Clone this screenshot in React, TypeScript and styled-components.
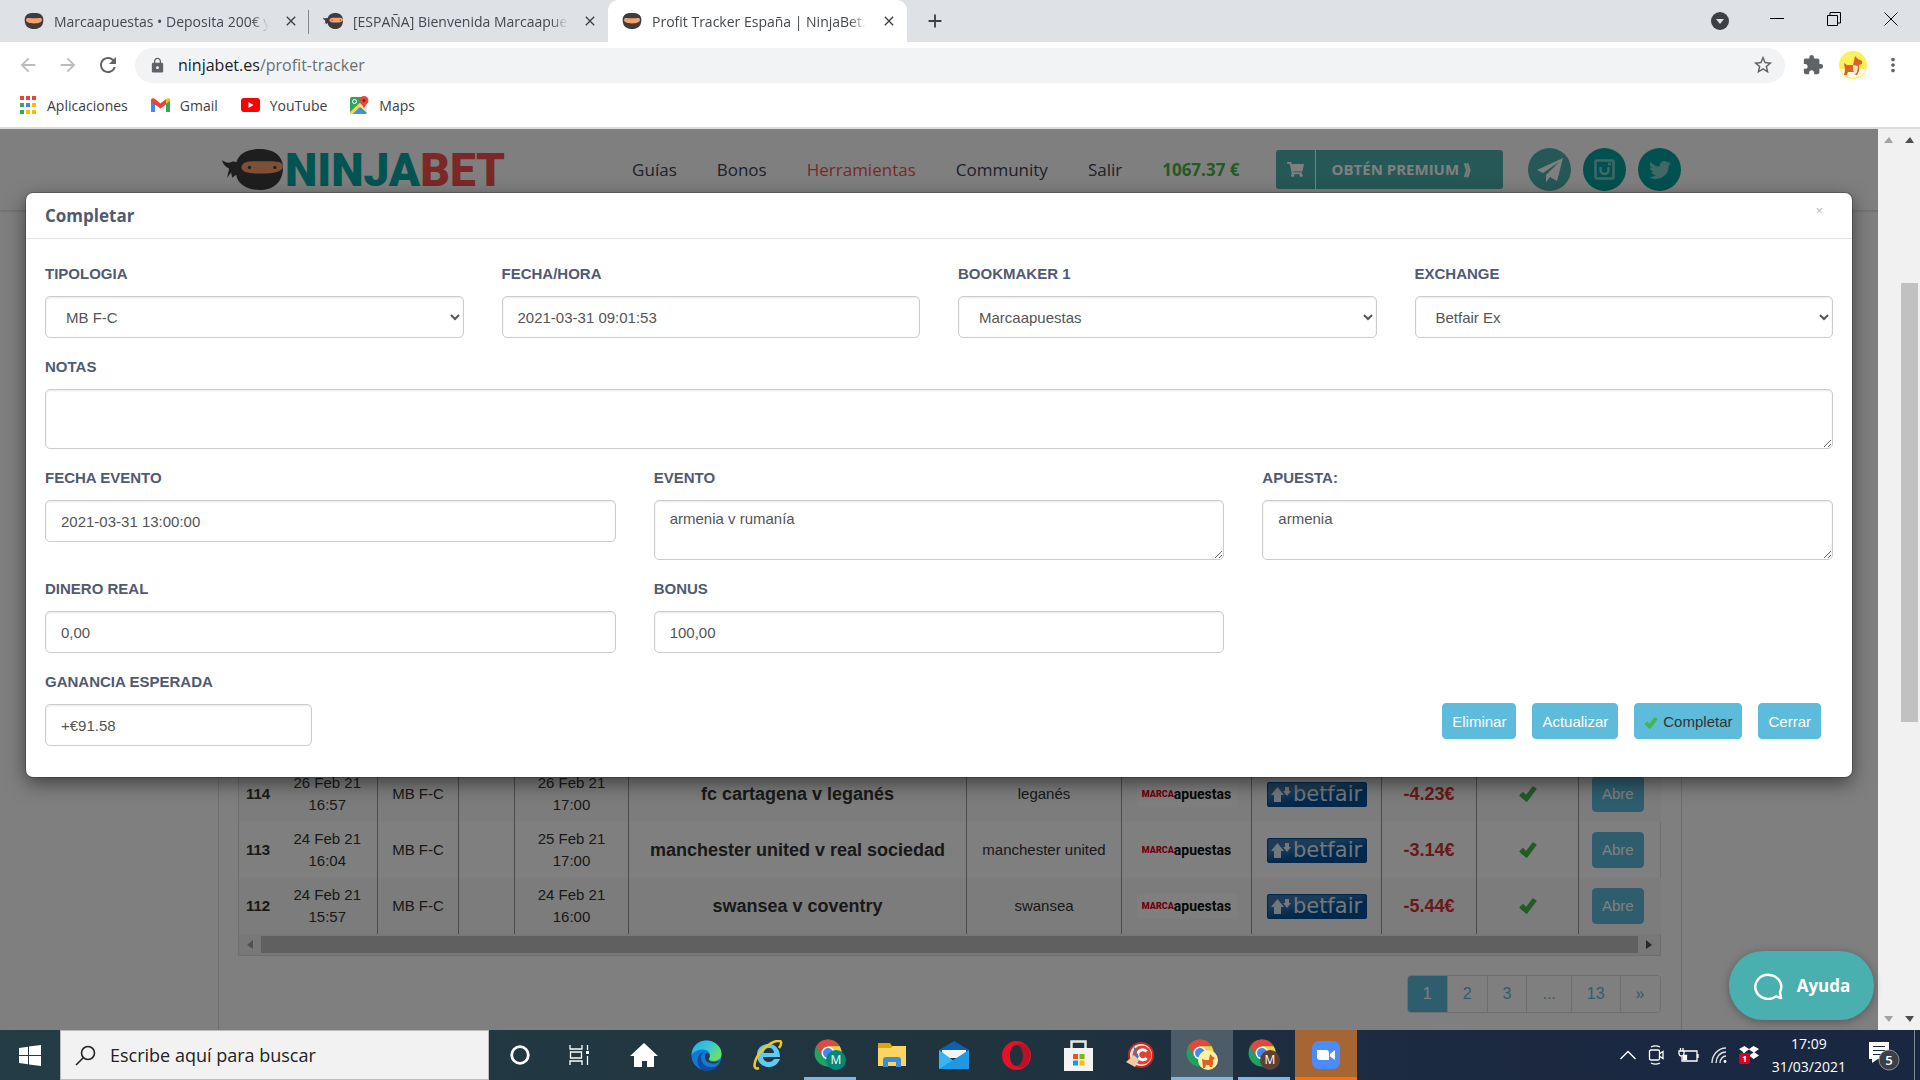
import React from "react";
import styled, { createGlobalStyle } from "styled-components";
import { FaShoppingCart, FaTwitter } from "react-icons/fa";
import {
  MdArrowBack,
  MdArrowForward,
  MdRefresh,
  MdLock,
  MdStarBorder,
  MdExtension,
  MdMoreVert,
  MdClose,
  MdAdd,
} from "react-icons/md";

const uiFont = `"Open Sans", "Noto Sans", sans-serif`;
const bodyFont = `"Liberation Sans", Arial, sans-serif`;

const GlobalStyle = createGlobalStyle`
  * { box-sizing: border-box; }
  body { margin: 0; background: #fff; font-family: ${bodyFont}; overflow: hidden; }
  button, input, select, textarea { font: inherit; margin: 0; }
  button { cursor: pointer; }
`;

const Screen = styled.div`
  display: flex;
  flex-direction: column;
  height: 100vh;
`;

/* ---------- browser chrome ---------- */

const IconButton = styled.button<{ $w?: number; $h?: number; $color?: string; $size?: number }>`
  display: flex;
  align-items: center;
  justify-content: center;
  flex: none;
  width: ${(p) => p.$w ?? 28}px;
  height: ${(p) => p.$h ?? 28}px;
  padding: 0;
  border: 0;
  background: none;
  color: ${(p) => p.$color ?? "#5f6368"};
  font-size: ${(p) => p.$size ?? 22}px;
`;

const TabStrip = styled.div`
  display: flex;
  height: 42px;
  padding-left: 10px;
  background: #dee1e6;
  font-family: ${uiFont};
`;

const Tab = styled.div<{ $active?: boolean; $divider?: boolean }>`
  display: flex;
  align-items: center;
  gap: 10px;
  width: 299px;
  padding: 0 6px 0 14px;
  border-radius: 10px 10px 0 0;
  background: ${(p) => (p.$active ? "#fff" : "transparent")};
  position: relative;
  &::after {
    content: "";
    display: ${(p) => (p.$divider ? "block" : "none")};
    position: absolute;
    right: 0;
    top: 10px;
    width: 1px;
    height: 24px;
    background: #85888c;
  }
`;

const TabTitle = styled.span`
  flex: 1;
  overflow: hidden;
  white-space: nowrap;
  font-size: 14px;
  color: #45494d;
  mask-image: linear-gradient(to right, #000 92%, transparent);
`;

const WindowControls = styled.div`
  display: flex;
  align-items: center;
  gap: 29px;
  margin-left: auto;
  padding-right: 15px;
`;

const Toolbar = styled.div`
  display: flex;
  align-items: center;
  height: 46px;
  padding: 0 13px 0 14px;
  font-family: ${uiFont};
`;

const NavButtons = styled.div`
  display: flex;
  gap: 12px;
  margin-right: 13px;
`;

const AddressBar = styled.div`
  display: flex;
  align-items: center;
  flex: 1;
  gap: 8px;
  height: 35px;
  padding: 0 8px 0 14px;
  border-radius: 18px;
  background: #f1f3f4;
  color: #5f6368;
  font-size: 17px;
`;

const Url = styled.span`
  flex: 1;
  padding-left: 4px;
  font-size: 16px;
  color: #6a6e72;
  b { font-weight: 400; color: #202124; }
`;

const ToolbarActions = styled.div`
  display: flex;
  align-items: center;
  gap: 12px;
  margin-left: 14px;
`;

const Bookmarks = styled.nav`
  display: flex;
  gap: 23px;
  height: 41px;
  padding: 0 18px 5px;
  border-bottom: 2px solid #dadce0;
  font-family: ${uiFont};
`;

const Bookmark = styled.a`
  display: flex;
  align-items: center;
  gap: 10px;
  font-size: 14px;
  color: #3c4043;
  text-decoration: none;
`;

/* ---------- page ---------- */

const Viewport = styled.main`
  display: flex;
  flex: 1;
  min-height: 0;
  position: relative;
`;

const Page = styled.div`
  display: flex;
  flex-direction: column;
  flex: 1;
  min-width: 0;
  overflow: hidden;
`;

const SiteHeader = styled.header`
  flex: none;
  height: 81px;
  box-shadow: 0 1px 3px rgba(0, 0, 0, 0.2);
  font-family: "Open Sans", sans-serif;
`;

const HeaderInner = styled.div`
  display: flex;
  align-items: center;
  max-width: 1463px;
  height: 81px;
  margin: 0 auto;
  padding-left: 4px;
`;

const Logo = styled.a`
  display: flex;
  align-items: center;
  gap: 2px;
  text-decoration: none;
  font: 900 46px/48px Roboto, sans-serif;
  color: #00aaa6;
  b { font-weight: 900; color: #f5524d; }
  span { display: block; }
`;

const SiteNav = styled.nav`
  display: flex;
  align-items: center;
  gap: 40px;
  margin-left: 127px;
`;

const SiteLink = styled.a<{ $tone?: "active" | "balance" }>`
  font-size: 17px;
  text-decoration: none;
  color: ${(p) => (p.$tone === "active" ? "#f5524d" : p.$tone === "balance" ? "#45b649" : "#3d4155")};
  font-weight: ${(p) => (p.$tone === "balance" ? 700 : 400)};
`;

const Premium = styled.button`
  display: flex;
  align-items: center;
  height: 39px;
  margin-left: auto;
  padding: 0;
  border: 0;
  border-radius: 3px;
  background: #4ab0af;
  color: #fff;
  font-size: 15px;
  font-weight: 700;
  svg { width: 39px; }
  span { padding: 0 32px 0 16px; border-left: 1px solid #fff; line-height: 39px; }
`;

const Socials = styled.div`
  display: flex;
  gap: 12px;
  margin-left: 25px;
`;

const Social = styled.a<{ $light?: boolean }>`
  display: flex;
  align-items: center;
  justify-content: center;
  width: 43px;
  height: 43px;
  border-radius: 50%;
  background: ${(p) => (p.$light ? "#4ab0af" : "#00a3a0")};
  color: ${(p) => (p.$light ? "#fff" : "#7fd0ce")};
  font-size: 22px;
`;

const Panel = styled.section`
  display: flex;
  flex: 1;
  flex-direction: column;
  justify-content: flex-end;
  width: 100%;
  max-width: 1464px;
  margin: 0 auto;
  padding: 0 20px 17px 19px;
  border: 1px solid #ddd;
  border-width: 0 1px;
`;

const TableFrame = styled.div`
  border: 1px solid #ddd;
`;

const Table = styled.table`
  width: 100%;
  table-layout: fixed;
  border-collapse: collapse;
  color: #333;
  font-size: 15px;
  line-height: 22px;
  text-align: center;
  tr { height: 56px; }
  tr:nth-child(odd) { background: #f9f9f9; }
  td:last-child { padding-right: 4px; }
`;

const Cell = styled.td<{ $line?: boolean; $kind?: "event" | "profit" | "id" }>`
  padding: 0;
  border-right: ${(p) => (p.$line ? "1px solid #999" : "0")};
  font-weight: ${(p) => (p.$kind ? 700 : 400)};
  font-size: ${(p) => (p.$kind === "event" || p.$kind === "profit" ? 18 : 15)}px;
  color: ${(p) => (p.$kind === "profit" ? "#d03232" : "#333")};
  svg { display: block; margin: 0 auto; }
`;

const Marca = styled.div`
  display: flex;
  align-items: center;
  justify-content: center;
  width: 100px;
  height: 25px;
  margin: 0 auto;
  border-radius: 3px;
  background: #fff;
  color: #111;
  font: 700 14px/25px Roboto, sans-serif;
  b { color: #e2001a; font-size: 9px; font-weight: 900; }
`;

const Betfair = styled.div`
  display: flex;
  align-items: center;
  justify-content: center;
  gap: 2px;
  width: 100px;
  height: 25px;
  margin: 0 auto;
  border: 1px solid #004f93;
  border-radius: 2px;
  background: linear-gradient(170deg, #3c78ae 30%, #00529c 60%);
  color: #e4eef8;
  font: 500 21px/22px "DejaVu Sans", sans-serif;
  svg { margin: 0; }
`;

const SmallButton = styled.button<{ $dark?: boolean }>`
  display: inline-flex;
  align-items: center;
  gap: 5px;
  height: 36px;
  padding: 0 9px;
  border: 1px solid #5dbbdc;
  border-radius: 4px;
  background: #5dbbdc;
  color: ${(p) => (p.$dark ? "#333" : "#fff")};
  font-size: 15px;
  svg { margin-top: 4px; }
`;

const HScroll = styled.div`
  display: flex;
  align-items: center;
  justify-content: space-between;
  gap: 8px;
  height: 21px;
  padding: 0 8px;
  background: #f1f1f1;
`;

const HThumb = styled.div`
  flex: 1;
  height: 17px;
  background: #c1c1c1;
`;

const Pagination = styled.nav`
  display: flex;
  align-self: flex-end;
  margin-top: 19px;
  border: 1px solid #ddd;
  border-radius: 4px;
  overflow: hidden;
`;

const PageLink = styled.a<{ $active?: boolean }>`
  padding: 0 15px;
  border-right: 1px solid #ddd;
  background: ${(p) => (p.$active ? "#5dbbdc" : "#fff")};
  color: ${(p) => (p.$active ? "#fff" : "#5dbbdc")};
  font-size: 16px;
  line-height: 36px;
  text-decoration: none;
  &:last-child { border-right: 0; }
`;

const VScroll = styled.div`
  display: flex;
  flex: none;
  flex-direction: column;
  align-items: center;
  justify-content: space-between;
  width: 21px;
  padding: 8px 0;
  background: #f1f1f1;
`;

const VTrack = styled.div`
  flex: 1;
  width: 17px;
  padding-top: 140px;
`;

const VThumb = styled.div`
  width: 17px;
  height: 439px;
  background: #c1c1c1;
`;

/* ---------- modal ---------- */

const ModalLayer = styled.div`
  position: absolute;
  inset: 0 21px 0 0;
  display: flex;
`;

const Backdrop = styled.div`
  flex: 1;
  padding: 64px 26px 0;
  background: rgba(0, 0, 0, 0.5);
`;

const Dialog = styled.div`
  border-radius: 7px;
  background: #fff;
  box-shadow: 0 0 0 1px rgba(0, 0, 0, 0.2), 0 6px 19px rgba(0, 0, 0, 0.5);
`;

const DialogHeader = styled.div`
  display: flex;
  align-items: center;
  justify-content: space-between;
  height: 46px;
  padding: 0 29px 0 19px;
  border-bottom: 1px solid #e5e5e5;
`;

const DialogTitle = styled.h2`
  margin: 0;
  font: 700 17px/24px "Open Sans", sans-serif;
  color: #515a73;
`;

const CloseX = styled.button`
  height: 28px;
  padding: 0;
  margin-bottom: 10px;
  border: 0;
  background: none;
  color: #bbb;
  font: 400 13px/28px ${bodyFont};
`;

const Form = styled.form`
  display: flex;
  flex-direction: column;
  gap: 18px;
  padding: 24px 19px 31px;
`;

const FormRow = styled.div<{ $cols: number }>`
  display: grid;
  grid-template-columns: repeat(${(p) => p.$cols}, 1fr);
  gap: 38px;
  align-items: start;
`;

const Field = styled.div<{ $narrow?: boolean }>`
  display: flex;
  flex-direction: column;
  gap: 11px;
  width: ${(p) => (p.$narrow ? "267px" : "auto")};
  label {
    color: #515a73;
    font-size: 15px;
    font-weight: 700;
    line-height: 22px;
    text-transform: uppercase;
  }
  input, select, textarea {
    width: 100%;
    height: 42px;
    padding: 0 15px;
    border: 1px solid #ccc;
    border-radius: 5px;
    background: #fff;
    box-shadow: inset 0 1px 2px rgba(0, 0, 0, 0.09);
    color: #555;
    font-size: 15px;
  }
  select { padding: 0 2px 0 16px; }
  textarea { display: block; height: 60px; padding: 7px 15px; line-height: 21px; }
`;

const FooterRow = styled.div`
  display: flex;
  align-items: flex-end;
  justify-content: space-between;
`;

const Actions = styled.div`
  display: flex;
  gap: 16px;
  padding: 0 12px 7px;
`;

const HelpButton = styled.button`
  position: absolute;
  right: 46px;
  bottom: 10px;
  display: flex;
  align-items: center;
  justify-content: center;
  gap: 13px;
  width: 145px;
  height: 69px;
  border: 0;
  border-radius: 34px;
  background: #4aafaf;
  box-shadow: 0 2px 10px rgba(0, 0, 0, 0.3);
  color: #fff;
  font: 700 17px/24px "Open Sans", sans-serif;
`;

/* ---------- taskbar ---------- */

const Taskbar = styled.footer`
  display: flex;
  flex: none;
  height: 50px;
  background: linear-gradient(to right, #233c45, #20343f 50%, #1b2840 80%, #1a2740);
  color: #fff;
  font-family: ${uiFont};
`;

const TaskButton = styled.button<{ $line?: string; $bg?: string; $inset?: number; $w?: number }>`
  display: flex;
  align-items: center;
  justify-content: center;
  flex: none;
  width: ${(p) => p.$w ?? 62}px;
  height: 50px;
  padding: 0;
  border: 0;
  background: ${(p) => p.$bg ?? "none"};
  position: relative;
  &::after {
    content: "";
    position: absolute;
    bottom: 0;
    left: ${(p) => p.$inset ?? 0}px;
    right: ${(p) => p.$inset ?? 0}px;
    height: 3px;
    background: ${(p) => p.$line ?? "transparent"};
  }
`;

const SearchBox = styled.label`
  display: flex;
  align-items: center;
  gap: 14px;
  width: 429px;
  padding: 0 14px;
  border: 1px solid #bbb;
  background: #f2f2f2;
  input {
    flex: 1;
    min-width: 0;
    padding: 0;
    border: 0;
    outline: 0;
    background: none;
    font-size: 18px;
    color: #222;
  }
  input::placeholder { color: #222; opacity: 1; }
`;

const Tray = styled.div`
  display: flex;
  align-items: center;
  gap: 12px;
  margin-left: auto;
  padding-right: 5px;
`;

const Clock = styled.div`
  padding: 0 10px 0 1px;
  font-size: 14px;
  line-height: 23px;
  text-align: center;
`;

const Notices = styled.div`
  display: flex;
  align-items: center;
  height: 50px;
  border-right: 1px solid #7d8794;
  padding-right: 14px;
`;

/* ---------- drawings ---------- */

const NinjaFace = ({ w = 20, h = 16, tail = false }: { w?: number; h?: number; tail?: boolean }) => (
  <svg width={w} height={h} viewBox="0 0 60 40" preserveAspectRatio="none" aria-hidden="true">
    <path
      d={
        tail
          ? "M37 0C50 0 60 6 60 18C60 33 50 40 37 40C25 40 15 34 14 25L10 28L9 23L5 28L7 19C3 17 1 15 0 11C4 14 8 14 11 12L14 13C17 4 25 0 37 0Z"
          : "M30 0C48 0 58 4 58 18C58 33 46 40 30 40C14 40 2 33 2 18C2 4 12 0 30 0Z"
      }
      fill="#3d3d3f"
    />
    {tail ? (
      <>
        <path d="M19 18C20 11 29 12 39 12C50 12 60 11 60 17C60 22 51 24 39 24C27 24 20 23 19 18Z" fill="#f4a16e" />
        <circle cx="27" cy="18" r="1.6" fill="#5b382a" />
        <circle cx="52" cy="18" r="1.6" fill="#5b382a" />
      </>
    ) : (
      <path d="M6 17C6 10 20 13 30 13C42 13 54 10 54 17C54 24 43 26 30 26C17 26 6 24 6 17Z" fill="#f4a16e" />
    )}
  </svg>
);

const Tick = ({ w = 18, h = 16 }: { w?: number; h?: number }) => (
  <svg width={w} height={h} viewBox="0 0 18 16" aria-hidden="true">
    <path d="M.5 9L3.500 6.200Q4 5.800 4.500 6.300L7 9 13.500.6Q14 0 14.600.4L17.400 2.300Q17.900 2.700 17.500 3.300L8.500 15.200Q7.500 16.300 6.500 15.200L.5 10Q0 9.500.5 9Z" fill="#45b649" />
  </svg>
);

const Triangle = ({ dir, color }: { dir: "up" | "down" | "left" | "right"; color: string }) => {
  const pts = { up: "0,6 9,6 5,0", down: "0,0 9,0 5,6", left: "6,0 6,9 0,5", right: "0,0 0,9 6,5" }[dir];
  const wide = dir === "up" || dir === "down";
  return (
    <svg width={wide ? 9 : 6} height={wide ? 6 : 9} aria-hidden="true">
      <polygon points={pts} fill={color} />
    </svg>
  );
};

const Dog = ({ size = 28 }: { size?: number }) => (
  <svg width={size} height={size} viewBox="0 0 28 28" aria-hidden="true">
    <circle cx="14" cy="14" r="14" fill="#fdf05d" />
    <path d="M1 18a14 14 0 0 0 26 0z" fill="#fffde8" />
    <path d="M5 12l3 2h6l1-4 1-5 3 3 4 2v3l-3 1v6l-2 4h-2l-1-3H9l-1 3H5l1-5z" fill="#e0601f" />
    <path d="M14 14l5 1-1 6-2 3-2-5z" fill="#fbe3cb" />
  </svg>
);

const Chrome = ({ letter, color, dog }: { letter?: string; color?: string; dog?: boolean }) => (
  <svg width="32" height="32" viewBox="0 0 32 32" aria-hidden="true">
    <circle cx="14" cy="14" r="13.500" fill="#1fa363" />
    <path d="M2.300 7.200A13.500 13.500 0 0 1 25.700 7.200H14L8 17.500Z" fill="#e0493e" />
    <path d="M25.700 7.200A13.500 13.500 0 0 1 14 27.500L20 17.500 14 7.200Z" fill="#fccd40" />
    <circle cx="14" cy="14" r="6.500" fill="#fff" />
    <circle cx="14" cy="14" r="5" fill="#4487f3" />
    {dog ? (
      <g transform="translate(12 11)">
        <circle cx="10" cy="10" r="10" fill="#fdf3a0" />
        <path d="M4 9l3 1h4l1-6 3 3 2 1-2 2v4l-1 3h-2l-1-2H8l-1 3H5z" fill="#e0601f" />
      </g>
    ) : (
      <>
        <circle cx="22" cy="21" r="10" fill={color} />
        <text x="22" y="25" textAnchor="middle" fontFamily="Open Sans" fontSize="12" fill="#fff">
          {letter}
        </text>
      </>
    )}
  </svg>
);

const WindowsIcon = () => (
  <svg width="22" height="21" viewBox="0 0 22 21" aria-hidden="true">
    <path d="M0 3l9-1.300V10H0zM10 1.500L22 0v10H10zM0 11h9v8.300L0 18zM10 11h12v10l-12-1.500z" fill="#fff" />
  </svg>
);

const Cortana = () => (
  <svg width="20" height="20" aria-hidden="true">
    <circle cx="10" cy="10" r="8.300" fill="none" stroke="#fff" strokeWidth="2.800" />
  </svg>
);

const TaskView = () => (
  <svg width="26" height="20" viewBox="0 0 26 20" fill="none" stroke="#fff" strokeWidth="1.300" aria-hidden="true">
    <path d="M1 0v4h12V0M1 20v-4h12v4M1.500 7h11v6h-11zM18.500 0v5M18.500 11v9" />
    <path d="M17 6h3v3h-3z" fill="#fff" stroke="none" />
  </svg>
);

const HomeIcon = () => (
  <svg width="28" height="24" viewBox="0 0 28 24" aria-hidden="true">
    <path d="M14 0l14 13h-4v11h-7v-6h-5v6H4V13H0z" fill="#fff" />
  </svg>
);

const EdgeIcon = () => (
  <svg width="31" height="31" viewBox="0 0 31 31" aria-hidden="true">
    <defs>
      <linearGradient id="edgeTop" x1="0" x2="1" y1="0" y2="0.600">
        <stop offset="0" stopColor="#2aa9e8" />
        <stop offset="0.500" stopColor="#35c5dd" />
        <stop offset="1" stopColor="#6be263" />
      </linearGradient>
    </defs>
    <circle cx="15.500" cy="15.500" r="15" fill="#1478d4" />
    <path d="M.5 15C1 6 7 .5 15.500.5 24 .5 31 7 30.500 14c0 5-4 7-8 7-3 0-5-1-4.500-2.500 3-4-.5-9-6-9C6 9.500 2 12 .5 15Z" fill="url(#edgeTop)" />
    <path d="M10 17c0 7 6 11 12 10 3 0 5-2 6-3-3 5-8 7-13 7C9 30 5 24 7 18c1-4 4-6 6-6-2 1-3 3-3 5Z" fill="#0d4f9e" />
    <path d="M15.500 13c3 0 4 3 2.500 5.500-1 2 2 4 6 3.500 2 0 4-1 5-2-1 2-3 3.500-6 3.500-5 0-9-2-9-6.500 0-2 .5-3.500 1.500-4Z" fill="#233c45" />
  </svg>
);

const ExplorerIcon = () => (
  <svg width="30" height="30" viewBox="0 0 30 30" aria-hidden="true">
    <path d="M27 17H10c0 3 3 5 6 5 2 0 4-1 5-3h6c-2 5-6 8-11 8C9 27 4 22 4 15S9 4 16 4c7 0 11 6 11 13zM10.500 13H21c0-3-2-5-5-5s-5 2-5.500 5z" fill="#5fcbf5" />
    <path d="M26 8c3-4 3-8-1-7C19 1 8 9 4 17c-4 8-3 13 2 11" fill="none" stroke="#f7c51e" strokeWidth="2.600" />
  </svg>
);

const FolderIcon = () => (
  <svg width="28" height="24" viewBox="0 0 28 24" aria-hidden="true">
    <path d="M0 0h12l2 3h14v8H0z" fill="#e0a30a" />
    <path d="M0 5h13l2-2h13v20H0z" fill="#fcd462" />
    <path d="M5 24v-7c0-2 1-3 3-3h12c2 0 3 1 3 3v7h-5v-5h-8v5z" fill="#3b8ed4" />
  </svg>
);

const MailIcon = () => (
  <svg width="30" height="28" viewBox="0 0 30 28" aria-hidden="true">
    <path d="M0 9l15-9 15 9v5H0z" fill="#0e62ad" />
    <path d="M3 9h24v8H3z" fill="#f4f4f4" />
    <path d="M0 9l15 11L30 9v19H0z" fill="#35b5f1" />
    <path d="M0 28L30 9v19z" fill="#2196e3" />
  </svg>
);

const OperaIcon = () => (
  <svg width="29" height="29" viewBox="0 0 29 29" aria-hidden="true">
    <path fillRule="evenodd" d="M14.500 0a14.500 14.500 0 1 0 0 29 14.500 14.500 0 0 0 0-29zm0 4c4 0 6.500 4.500 6.500 10.500S18.500 25 14.500 25 8 20.500 8 14.500 10.500 4 14.500 4z" fill="#e3122a" />
    <path d="M14.500 4c4 0 6.500 4.500 6.500 10.500S18.500 25 14.500 25c3 2 6 2 9 0a14.500 14.500 0 0 0 0-21c-3-2-6-2-9 0z" fill="#b81226" />
  </svg>
);

const StoreIcon = () => (
  <svg width="29" height="31" viewBox="0 0 29 31" aria-hidden="true">
    <path d="M7.500 9V1.500h14V9" fill="none" stroke="#e8e8e8" strokeWidth="2.500" />
    <path d="M0 8h29v23H0z" fill="#f3f3f3" />
    <path d="M9 14h5v5H9z" fill="#f25022" />
    <path d="M15.500 14h5v5h-5z" fill="#7fba00" />
    <path d="M9 20.500h5v5H9z" fill="#00a4ef" />
    <path d="M15.500 20.500h5v5h-5z" fill="#ffb900" />
  </svg>
);

const CleanerIcon = () => (
  <svg width="28" height="27" viewBox="0 0 28 27" aria-hidden="true">
    <circle cx="15" cy="13" r="13" fill="#c9251c" />
    <circle cx="15" cy="13" r="11" fill="#f0e4e0" />
    <circle cx="16" cy="13" r="9.500" fill="#e2432f" />
    <path d="M20.500 9.500A5 5 0 1 0 20.500 16" fill="none" stroke="#fff" strokeWidth="3" />
    <path d="M7 2l6 13-3 2z" fill="#2d7fc4" />
    <path d="M0 20l8-7 5 5-4 7z" fill="#f0c9a0" />
  </svg>
);

const ZoomIcon = () => (
  <svg width="28" height="28" viewBox="0 0 28 28" aria-hidden="true">
    <rect width="28" height="28" rx="7" fill="#4a8cff" />
    <path d="M5 9h9c2 0 3 1 3 3v7H8c-2 0-3-1-3-3zM18 13l5-4v10l-5-3.500z" fill="#fff" />
  </svg>
);

const MarcaLogo = () => (
  <Marca>
    <b>MARCA</b>apuestas
  </Marca>
);

const BetfairLogo = () => (
  <Betfair>
    <svg width="20" height="17" viewBox="0 0 20 17" aria-hidden="true">
      <path d="M6.500 1l6.500 8H10v7H3V9H0zM16 10l-4-5h2V1h4v4h2z" fill="#e4eef8" />
    </svg>
    betfair
  </Betfair>
);

/* ---------- data ---------- */

const tabs = [
  { title: "Marcaapuestas • Deposita 200€ y", divider: true },
  { title: "[ESPAÑA] Bienvenida Marcaapuestas", tail: true },
  { title: "Profit Tracker España | NinjaBet.es", active: true },
];

const bets = [
  { id: 114, made: ["26 Feb 21", "16:57"], event: ["26 Feb 21", "17:00"], name: "fc cartagena v leganés", pick: "leganés", profit: "-4.23€" },
  { id: 113, made: ["24 Feb 21", "16:04"], event: ["25 Feb 21", "17:00"], name: "manchester united v real sociedad", pick: "manchester united", profit: "-3.14€" },
  { id: 112, made: ["24 Feb 21", "15:57"], event: ["24 Feb 21", "16:00"], name: "swansea v coventry", pick: "swansea", profit: "-5.44€" },
];

const columnWidths = [39, 100, 81, 56, 114, 338, 155, 130, 130, 95, 102, 82];

const BrowserTop = () => (
  <>
    <TabStrip>
      {tabs.map((t) => (
        <Tab key={t.title} $active={t.active} $divider={t.divider}>
          <NinjaFace tail={t.tail} />
          <TabTitle>{t.title}</TabTitle>
          <IconButton $w={24} $size={16} $color="#3c4043" aria-label="Cerrar pestaña">
            <MdClose />
          </IconButton>
        </Tab>
      ))}
      <IconButton $w={56} $h={42} $size={22} $color="#3c4043" aria-label="Nueva pestaña">
        <MdAdd />
      </IconButton>
      <WindowControls>
        <IconButton aria-label="Buscar pestañas">
          <svg width="18" height="18">
            <circle cx="9" cy="9" r="9" fill="#3c4043" />
            <path d="M5 7h8l-4 5z" fill="#dee1e6" />
          </svg>
        </IconButton>
        <IconButton aria-label="Minimizar">
          <svg width="14" height="14">
            <path d="M0 4.500h14" stroke="#000" />
          </svg>
        </IconButton>
        <IconButton aria-label="Restaurar">
          <svg width="14" height="18" fill="none" stroke="#000">
            <path d="M.5 3.500h10v10H.5zM3 3V.5h10.500V11H11" />
          </svg>
        </IconButton>
        <IconButton aria-label="Cerrar">
          <svg width="14" height="18" stroke="#000">
            <path d="M.5.5l13 13M13.500.5l-13 13" />
          </svg>
        </IconButton>
      </WindowControls>
    </TabStrip>
    <Toolbar>
      <NavButtons>
        <IconButton $color="#babcbe" aria-label="Atrás"><MdArrowBack /></IconButton>
        <IconButton $color="#babcbe" aria-label="Adelante"><MdArrowForward /></IconButton>
        <IconButton $size={24} aria-label="Recargar"><MdRefresh /></IconButton>
      </NavButtons>
      <AddressBar>
        <MdLock />
        <Url><b>ninjabet.es</b>/profit-tracker</Url>
        <IconButton aria-label="Favorito"><MdStarBorder /></IconButton>
      </AddressBar>
      <ToolbarActions>
        <IconButton aria-label="Extensiones"><MdExtension /></IconButton>
        <IconButton aria-label="Perfil"><Dog /></IconButton>
        <IconButton aria-label="Menú"><MdMoreVert /></IconButton>
      </ToolbarActions>
    </Toolbar>
    <Bookmarks>
      <Bookmark href="#apps">
        <svg width="19" height="18" aria-hidden="true">
          {["#ea4335", "#ea4335", "#ea4335", "#34a853", "#4285f4", "#fbbc04", "#34a853", "#fbbc04", "#fbbc04"].map((c, i) => (
            <rect key={i} x={2 + (i % 3) * 6} y={Math.floor(i / 3) * 7} width="4" height="4" fill={c} />
          ))}
        </svg>
        Aplicaciones
      </Bookmark>
      <Bookmark href="#gmail">
        <svg width="19" height="14" viewBox="0 0 19 14" aria-hidden="true">
          <path d="M0 2v12h4V5z" fill="#4285f4" />
          <path d="M19 2v12h-4V5z" fill="#34a853" />
          <path d="M15 1.500L17 0c1 0 2 .5 2 2.500L15 6z" fill="#fbbc04" />
          <path d="M0 2.500C0 .5 2-.5 4 1l5.500 4.500L15 1v5.500l-5.500 4L0 4z" fill="#ea4335" />
        </svg>
        Gmail
      </Bookmark>
      <Bookmark href="#youtube">
        <svg width="19" height="14" aria-hidden="true">
          <rect width="19" height="14" rx="3" fill="#f00" />
          <path d="M7.500 4v6l5-3z" fill="#fff" />
        </svg>
        YouTube
      </Bookmark>
      <Bookmark href="#maps">
        <svg width="19" height="19" viewBox="0 0 19 19" aria-hidden="true">
          <rect y="1" width="17" height="17" rx="2" fill="#34a261" />
          <path d="M0 16L15 2l2 2v12L11 10 3 18H1z" fill="#fbd34a" />
          <path d="M3 18l6-6 7 6z" fill="#4c8bf5" />
          <path d="M9 10l8 7V6z" fill="#dfe3e6" />
          <circle cx="4.500" cy="5.500" r="2" fill="none" stroke="#fff" />
          <path d="M14 0a4.500 4.500 0 0 1 4.500 4.500C18.500 8 14.500 9 14 13 13.500 9 9.500 8 9.500 4.500A4.500 4.500 0 0 1 14 0z" fill="#e04a3f" />
          <circle cx="14" cy="4.500" r="1.600" fill="#84231b" />
        </svg>
        Maps
      </Bookmark>
    </Bookmarks>
  </>
);

const SitePage = () => (
  <Page>
    <SiteHeader>
      <HeaderInner>
        <Logo href="#inicio">
          <NinjaFace w={61} h={41} tail />
          <span>NINJA<b>BET</b></span>
        </Logo>
        <SiteNav>
          <SiteLink href="#guias">Guías</SiteLink>
          <SiteLink href="#bonos">Bonos</SiteLink>
          <SiteLink href="#herramientas" $tone="active">Herramientas</SiteLink>
          <SiteLink href="#community">Community</SiteLink>
          <SiteLink href="#salir">Salir</SiteLink>
          <SiteLink href="#saldo" $tone="balance">1067.37 €</SiteLink>
        </SiteNav>
        <Premium>
          <FaShoppingCart />
          <span>OBTÉN PREMIUM ⟫</span>
        </Premium>
        <Socials>
          <Social href="#telegram" $light aria-label="Telegram">
            <svg width="26" height="24" viewBox="0 0 26 24" aria-hidden="true">
              <path d="M26 0L0 12l6 3L22 4 9 17v7l4-5 7 4z" fill="#fff" />
            </svg>
          </Social>
          <Social href="#instagram" aria-label="Instagram">
            <svg width="21" height="21" viewBox="0 0 21 21" fill="none" stroke="#7fd0ce" strokeWidth="2.500" aria-hidden="true">
              <rect x="1.500" y="1.500" width="18" height="18" rx="1" />
              <path d="M6.500 8v3a4 4 0 0 0 8 0V8M14 5h3" />
            </svg>
          </Social>
          <Social href="#twitter" aria-label="Twitter"><FaTwitter /></Social>
        </Socials>
      </HeaderInner>
    </SiteHeader>
    <Panel>
      <TableFrame>
        <Table>
          <colgroup>
            {columnWidths.map((w, i) => <col key={i} style={{ width: w }} />)}
          </colgroup>
          <tbody>
            {bets.map((b) => (
              <tr key={b.id}>
                <Cell $kind="id">{b.id}</Cell>
                <Cell $line>{b.made[0]}<br />{b.made[1]}</Cell>
                <Cell $line>MB F-C</Cell>
                <Cell $line />
                <Cell $line>{b.event[0]}<br />{b.event[1]}</Cell>
                <Cell $line $kind="event">{b.name}</Cell>
                <Cell $line>{b.pick}</Cell>
                <Cell $line><MarcaLogo /></Cell>
                <Cell $line><BetfairLogo /></Cell>
                <Cell $line $kind="profit">{b.profit}</Cell>
                <Cell $line><Tick /></Cell>
                <Cell><SmallButton>Abre</SmallButton></Cell>
              </tr>
            ))}
          </tbody>
        </Table>
        <HScroll>
          <Triangle dir="left" color="#a3a3a3" />
          <HThumb />
          <Triangle dir="right" color="#505050" />
        </HScroll>
      </TableFrame>
      <Pagination aria-label="Páginas">
        {["1", "2", "3", "...", "13", "»"].map((p, i) => (
          <PageLink key={p} href={`#p${i}`} $active={i === 0}>{p}</PageLink>
        ))}
      </Pagination>
    </Panel>
  </Page>
);

const BetModal = () => (
  <ModalLayer>
    <Backdrop>
      <Dialog role="dialog" aria-labelledby="dialog-title">
        <DialogHeader>
          <DialogTitle id="dialog-title">Completar</DialogTitle>
          <CloseX aria-label="Cerrar ventana">×</CloseX>
        </DialogHeader>
        <Form onSubmit={(e) => e.preventDefault()}>
          <FormRow $cols={4}>
            <Field>
              <label htmlFor="tipologia">Tipologia</label>
              <select id="tipologia"><option>MB F-C</option></select>
            </Field>
            <Field>
              <label htmlFor="fecha">Fecha/Hora</label>
              <input id="fecha" defaultValue="2021-03-31 09:01:53" />
            </Field>
            <Field>
              <label htmlFor="bookmaker">Bookmaker 1</label>
              <select id="bookmaker"><option>Marcaapuestas</option></select>
            </Field>
            <Field>
              <label htmlFor="exchange">Exchange</label>
              <select id="exchange"><option>Betfair Ex</option></select>
            </Field>
          </FormRow>
          <FormRow $cols={1}>
            <Field>
              <label htmlFor="notas">Notas</label>
              <textarea id="notas" />
            </Field>
          </FormRow>
          <FormRow $cols={3}>
            <Field>
              <label htmlFor="fecha-evento">Fecha evento</label>
              <input id="fecha-evento" defaultValue="2021-03-31 13:00:00" />
            </Field>
            <Field>
              <label htmlFor="evento">Evento</label>
              <textarea id="evento" defaultValue="armenia v rumanía" spellCheck={false} />
            </Field>
            <Field>
              <label htmlFor="apuesta">Apuesta:</label>
              <textarea id="apuesta" defaultValue="armenia" spellCheck={false} />
            </Field>
          </FormRow>
          <FormRow $cols={3}>
            <Field>
              <label htmlFor="dinero">Dinero real</label>
              <input id="dinero" defaultValue="0,00" />
            </Field>
            <Field>
              <label htmlFor="bonus">Bonus</label>
              <input id="bonus" defaultValue="100,00" />
            </Field>
          </FormRow>
          <FooterRow>
            <Field $narrow>
              <label htmlFor="ganancia">Ganancia esperada</label>
              <input id="ganancia" defaultValue="+€91.58" />
            </Field>
            <Actions>
              <SmallButton>Eliminar</SmallButton>
              <SmallButton>Actualizar</SmallButton>
              <SmallButton $dark><Tick w={14} h={12} />Completar</SmallButton>
              <SmallButton>Cerrar</SmallButton>
            </Actions>
          </FooterRow>
        </Form>
      </Dialog>
    </Backdrop>
    <VScroll>
      <Triangle dir="up" color="#a3a3a3" />
      <Triangle dir="down" color="#a3a3a3" />
    </VScroll>
  </ModalLayer>
);

const blue = "#76b9ed";

const BottomBar = () => (
  <Taskbar>
    <TaskButton aria-label="Inicio" $w={60}><WindowsIcon /></TaskButton>
    <SearchBox>
      <svg width="21" height="21" fill="none" stroke="#222" strokeWidth="1.600" aria-hidden="true">
        <circle cx="13" cy="8" r="6.500" />
        <path d="M8.500 12.500L1 20" />
      </svg>
      <input aria-label="Buscar" placeholder="Escribe aquí para buscar" />
    </SearchBox>
    <TaskButton aria-label="Cortana"><Cortana /></TaskButton>
    <TaskButton aria-label="Vista de tareas"><TaskView /></TaskButton>
    <TaskButton aria-label="Casa"><HomeIcon /></TaskButton>
    <TaskButton aria-label="Edge"><EdgeIcon /></TaskButton>
    <TaskButton aria-label="Explorer"><ExplorerIcon /></TaskButton>
    <TaskButton aria-label="Chrome" $line={blue} $inset={5}><Chrome letter="M" color="#00897b" /></TaskButton>
    <TaskButton aria-label="Archivos"><FolderIcon /></TaskButton>
    <TaskButton aria-label="Correo"><MailIcon /></TaskButton>
    <TaskButton aria-label="Opera"><OperaIcon /></TaskButton>
    <TaskButton aria-label="Store"><StoreIcon /></TaskButton>
    <TaskButton aria-label="CCleaner"><CleanerIcon /></TaskButton>
    <TaskButton aria-label="Chrome perfil" $line={blue} $bg="#4c5c68"><Chrome dog /></TaskButton>
    <TaskButton aria-label="Chrome trabajo" $line={blue} $inset={5}><Chrome letter="M" color="#5d4037" /></TaskButton>
    <TaskButton aria-label="Zoom" $line="#ff6f00" $bg="#a56634"><ZoomIcon /></TaskButton>
    <Tray>
      <svg width="16" height="10" fill="none" stroke="#fff" strokeWidth="1.400" aria-hidden="true">
        <path d="M.5 9L8 1.500 15.500 9" />
      </svg>
      <svg width="18" height="20" viewBox="0 0 18 20" fill="none" stroke="#fff" strokeWidth="1.300" aria-hidden="true">
        <path d="M3 2c3-1.500 6-1.500 9 0M3 18c3 1.500 6 1.500 9 0M3 5h7c1 0 1.500.5 1.500 1.500v7c0 1-.5 1.500-1.500 1.500H3c-1 0-1.500-.5-1.500-1.500v-7C1.500 5.500 2 5 3 5zM12 8.500l3-2v7l-3-2" />
      </svg>
      <svg width="21" height="14" viewBox="0 0 21 14" fill="none" stroke="#fff" strokeWidth="1.300" aria-hidden="true">
        <path d="M6 3h13v10H4V8M1 3h5v2c0 2-1 3-2.500 3S1 7 1 5zM2.500 0v3M5 0v3M20 6v4" />
        <path d="M5.500 7.500h3v4h-3z" fill="#fff" />
      </svg>
      <svg width="16" height="16" fill="none" stroke="#dfe3e8" strokeWidth="1.400" aria-hidden="true">
        <path d="M1 16C1 8 7 1 15 1M5 16C5 10 9 5 15 5M9 16c0-4 3-7 6-7" />
        <circle cx="14" cy="14.500" r="1.400" fill="#fff" stroke="none" />
      </svg>
      <svg width="20" height="20" aria-hidden="true">
        <path d="M5.500 1L10 4l4.500-3L20 4l-4.500 3.300L20 10.500 14.500 14 10 10.500 5.500 14 0 10.500l4.500-3.200L0 4z" fill="#fff" />
        <path d="M10 4.500l4.500 3-4.500 3-4.500-3z" fill="#1b2840" />
        <rect y="8" width="11" height="11" rx="2" fill="#d9001b" />
        <text x="5.500" y="17" textAnchor="middle" fontFamily="Open Sans" fontWeight="700" fontSize="9" fill="#fff">1</text>
      </svg>
      <Clock>17:09<br />31/03/2021</Clock>
      <Notices>
        <svg width="32" height="32" aria-hidden="true">
          <path d="M1 3h20v17H10l-6 4v-4H1z" fill="#fff" />
          <path d="M5 7.500h12M5 11.500h12M5 15.500h12" stroke="#1b2840" />
          <circle cx="21" cy="21" r="10" fill="#3c4046" stroke="#8b9096" />
          <text x="21" y="26" textAnchor="middle" fontFamily="Open Sans" fontWeight="600" fontSize="13" fill="#fff">5</text>
        </svg>
      </Notices>
    </Tray>
  </Taskbar>
);

export default function App() {
  return (
    <Screen>
      <GlobalStyle />
      <BrowserTop />
      <Viewport>
        <SitePage />
        <VScroll>
          <Triangle dir="up" color="#505050" />
          <VTrack><VThumb /></VTrack>
          <Triangle dir="down" color="#505050" />
        </VScroll>
        <BetModal />
        <HelpButton>
          <svg width="31" height="28" viewBox="0 0 31 28" fill="none" stroke="#fff" strokeWidth="2.500" aria-hidden="true">
            <path d="M28 26l-5-1.500A13 12 0 1 1 27 20z" strokeLinejoin="round" />
          </svg>
          Ayuda
        </HelpButton>
      </Viewport>
      <BottomBar />
    </Screen>
  );
}
